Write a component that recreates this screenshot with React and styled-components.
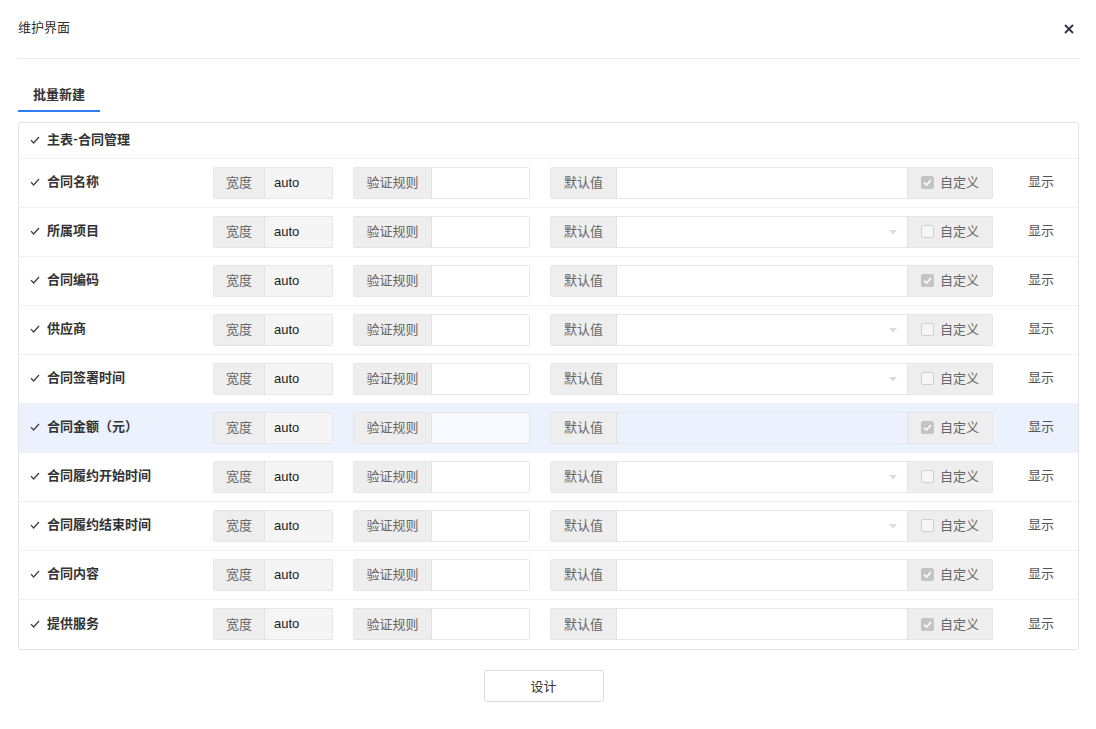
import React from 'react';
import styled, { createGlobalStyle } from 'styled-components';

const GlobalStyle = createGlobalStyle`
  *, *::before, *::after {
    box-sizing: border-box;
  }
  html, body {
    margin: 0;
    padding: 0;
    background: #fff;
  }
  body {
    font-family: "Roboto", "Noto Sans CJK SC", sans-serif;
    font-size: 13px;
    color: #333;
  }
`;

const Page = styled.div`
  padding: 0 17px 0 18px;
`;

const Header = styled.div`
  height: 59px;
  display: flex;
  align-items: center;
  justify-content: space-between;
  border-bottom: 1px solid #e8e8e8;
`;

const Title = styled.div`
  font-size: 13px;
  color: #333;
  margin-top: -5px;
`;

const Close = styled.button`
  border: none;
  background: none;
  padding: 0;
  margin-right: 5px;
  width: 10px;
  height: 10px;
  display: flex;
  cursor: pointer;
`;

const TabBar = styled.div`
  display: flex;
  margin-top: 20px;
`;

const Tab = styled.div`
  width: 82px;
  height: 33px;
  line-height: 31px;
  text-align: center;
  font-weight: 700;
  color: #333;
  border-bottom: 2px solid #2f7df6;
`;

const Table = styled.div`
  margin-top: 10px;
  border: 1px solid #e3e3e3;
  border-radius: 2px;
`;

const GroupHead = styled.div`
  height: 36px;
  display: flex;
  align-items: center;
  padding: 0 0 4px 11px;
  gap: 7px;
  font-weight: 700;
  border-bottom: 1px solid #f0f0f0;
`;

const Row = styled.div`
  height: 49px;
  display: flex;
  align-items: center;
  padding-bottom: 1px;
  background: ${({ active }) => (active ? '#ebf2fd' : 'transparent')};
  border-bottom: ${({ last }) => (last ? 'none' : '1px solid #f0f0f0')};
`;

const LabelCell = styled.div`
  width: 194px;
  padding: 0 0 4px 11px;
  display: flex;
  align-items: center;
  gap: 7px;
  font-weight: 700;
  color: #333;
`;

const Group = styled.div`
  display: flex;
  height: 32px;
  width: ${({ w }) => w}px;
  margin-right: ${({ mr }) => mr || 0}px;
  border: 1px solid #e6e6e6;
  border-radius: 2px;
  overflow: hidden;
`;

const Addon = styled.div`
  width: ${({ w }) => w}px;
  flex: none;
  display: flex;
  align-items: center;
  justify-content: center;
  gap: 6px;
  padding-bottom: 2px;
  background: #eeeeee;
  color: #666;
  border-right: ${({ right }) => (right ? 'none' : '1px solid #e2e2e2')};
  border-left: ${({ right }) => (right ? '1px solid #e2e2e2' : 'none')};
`;

const Field = styled.div`
  flex: 1;
  display: flex;
  align-items: center;
  justify-content: ${({ caret }) => (caret ? 'flex-end' : 'flex-start')};
  padding: 0 10px 1px 9px;
  background: ${({ bg }) => bg || '#fff'};
  font-family: "Liberation Sans", "Noto Sans CJK SC", sans-serif;
  color: #1a1a1a;
`;

const Box = styled.span`
  width: 13px;
  height: 13px;
  margin-top: 2px;
  border-radius: 2px;
  border: 1px solid ${({ checked }) => (checked ? '#c4c4c4' : '#cfcfcf')};
  background: ${({ checked }) => (checked ? '#c4c4c4' : '#f6f6f6')};
  display: inline-flex;
  align-items: center;
  justify-content: center;
`;

const Show = styled.a`
  margin-left: 35px;
  color: #555;
  cursor: pointer;
  padding-bottom: 4px;
`;

const Footer = styled.div`
  display: flex;
  justify-content: center;
  padding: 20px 10px 0 0;
`;

const Button = styled.button`
  width: 120px;
  height: 32px;
  padding: 0 0 2px;
  background: #fff;
  border: 1px solid #dcdcdc;
  border-radius: 2px;
  font-family: "Noto Sans CJK SC", sans-serif;
  font-size: 13px;
  color: #333;
  cursor: pointer;
`;

const Check = () => (
  <svg width="10" height="8" viewBox="0 0 10 8" style={{ marginTop: 3 }}>
    <polyline points="1,4.2 3.6,7 9,1" fill="none" stroke="#3a3a3a" strokeWidth="1.2" />
  </svg>
);

const Caret = () => (
  <svg width="8" height="5" viewBox="0 0 8 5" style={{ marginTop: 2 }}>
    <polygon points="0,0 8,0 4,4.5" fill="#dcdcdc" />
  </svg>
);

const fields = [
  { name: '合同名称', custom: true },
  { name: '所属项目', custom: false },
  { name: '合同编码', custom: true },
  { name: '供应商', custom: false },
  { name: '合同签署时间', custom: false },
  { name: '合同金额（元）', custom: true, active: true },
  { name: '合同履约开始时间', custom: false },
  { name: '合同履约结束时间', custom: false },
  { name: '合同内容', custom: true },
  { name: '提供服务', custom: true },
];

const App = () => (
  <Page>
    <GlobalStyle />
    <Header>
      <Title>维护界面</Title>
      <Close aria-label="关闭">
        <svg width="10" height="10" viewBox="0 0 10 10">
          <path d="M1 1 L9 9 M9 1 L1 9" stroke="#2b3445" strokeWidth="1.8" />
        </svg>
      </Close>
    </Header>
    <TabBar>
      <Tab>批量新建</Tab>
    </TabBar>
    <Table>
      <GroupHead>
        <Check />
        主表-合同管理
      </GroupHead>
      {fields.map((f, i) => (
        <Row key={f.name} active={f.active} last={i === fields.length - 1}>
          <LabelCell>
            <Check />
            {f.name}
          </LabelCell>
          <Group w={120} mr={20}>
            <Addon w={51}>宽度</Addon>
            <Field bg="#f5f5f5">auto</Field>
          </Group>
          <Group w={177} mr={20}>
            <Addon w={78}>验证规则</Addon>
            <Field bg={f.active ? '#f6f9fe' : '#fff'} />
          </Group>
          <Group w={443}>
            <Addon w={66}>默认值</Addon>
            <Field caret={!f.custom} bg={f.active ? 'transparent' : '#fff'}>
              {!f.custom && <Caret />}
            </Field>
            <Addon w={85} right>
              <Box checked={f.custom}>
                {f.custom && (
                  <svg width="9" height="7" viewBox="0 0 9 7">
                    <polyline points="1,3.5 3.4,6 8,1" fill="none" stroke="#fff" strokeWidth="1.6" />
                  </svg>
                )}
              </Box>
              自定义
            </Addon>
          </Group>
          <Show>显示</Show>
        </Row>
      ))}
    </Table>
    <Footer>
      <Button>设计</Button>
    </Footer>
  </Page>
);

export default App;
